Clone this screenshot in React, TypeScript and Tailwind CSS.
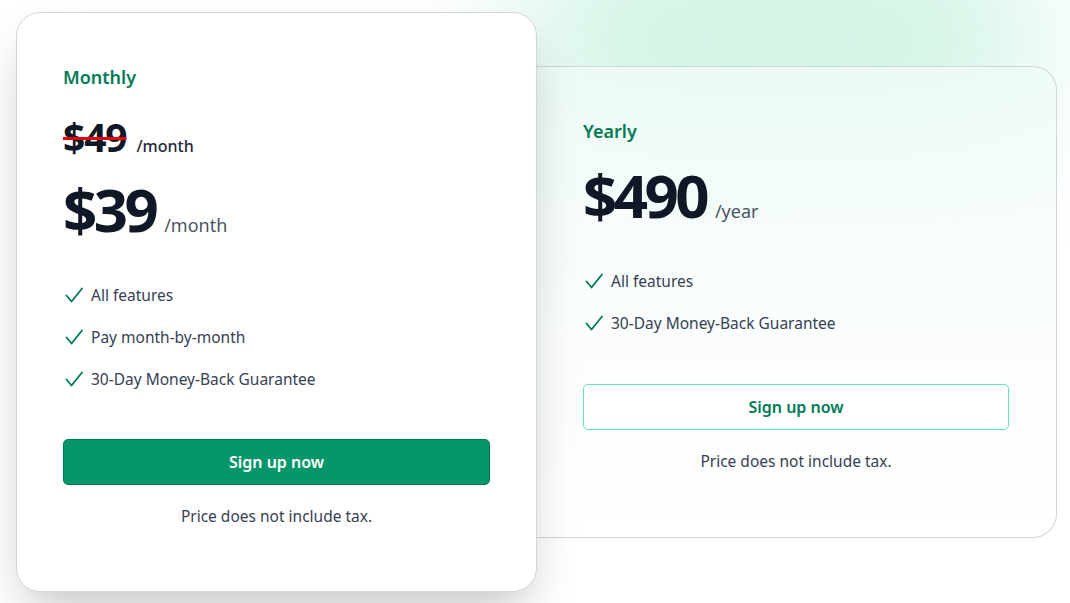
import React from "react";

type Plan = {
  name: string;
  price: string;
  unit: string;
  oldPrice?: string;
  features: string[];
  highlighted: boolean;
};

const plans: Plan[] = [
  {
    name: "Monthly",
    oldPrice: "$49",
    price: "$39",
    unit: "/month",
    features: ["All features", "Pay month-by-month", "30-Day Money-Back Guarantee"],
    highlighted: true,
  },
  {
    name: "Yearly",
    price: "$490",
    unit: "/year",
    features: ["All features", "30-Day Money-Back Guarantee"],
    highlighted: false,
  },
];

const CheckMark = () => (
  <svg viewBox="0 0 18 16" className="ml-[2px] h-4 w-[18px] shrink-0 text-emerald-700" fill="none">
    <path d="M1.5 8.5 6.5 14.5 17 1.5" stroke="currentColor" strokeWidth="1.8" strokeLinecap="round" strokeLinejoin="round" />
  </svg>
);

const FeatureList = ({ features }: { features: string[] }) => (
  <ul className="mt-[44px] flex flex-col gap-[18px]">
    {features.map((f) => (
      <li key={f} className="flex items-center gap-[8px] text-[15.5px] leading-6 text-gray-700">
        <CheckMark />
        <span>{f}</span>
      </li>
    ))}
  </ul>
);

const PlanCard = ({ plan }: { plan: Plan }) => {
  if (plan.highlighted) {
    return (
      <div className="relative z-10 flex h-[580px] w-[521px] shrink-0 flex-col rounded-3xl border border-gray-300 bg-white px-[46px] pt-[50px] shadow-2xl">
        <h3 className="text-lg leading-7 font-semibold text-emerald-700">{plan.name}</h3>
        <div className="mt-[26px] flex items-baseline gap-[10px]">
          <span className="text-[39px] leading-10 font-bold tracking-[-0.03em] text-gray-900 line-through decoration-red-600 decoration-[3px]">
            {plan.oldPrice}
          </span>
          <span className="text-base font-medium text-gray-800">{plan.unit}</span>
        </div>
        <div className="mt-[21px] flex items-baseline gap-[9px]">
          <span className="text-6xl leading-none font-bold tracking-[-0.06em] text-gray-900">{plan.price}</span>
          <span className="text-lg text-gray-600">{plan.unit}</span>
        </div>
        <FeatureList features={plan.features} />
        <button className="mt-[48px] h-[46px] w-full rounded-[5px] border border-emerald-700 bg-[#069669] text-base font-semibold text-white">
          Sign up now
        </button>
        <p className="mt-[19px] text-center text-[15.5px] leading-6 text-gray-700">Price does not include tax.</p>
      </div>
    );
  }

  return (
    <div className="flex h-[472px] w-[520px] shrink-0 flex-col rounded-r-3xl border border-l-0 border-gray-300 bg-gradient-to-b from-[#eefbf6]/90 via-[#f9fdfb]/90 to-white pr-[47px] pl-[46px] pt-[50px]">
      <h3 className="text-lg leading-7 font-semibold text-emerald-700">{plan.name}</h3>
      <div className="mt-[20px] flex items-baseline gap-[9px]">
        <span className="text-6xl leading-none font-bold tracking-[-0.06em] text-gray-900">{plan.price}</span>
        <span className="text-lg text-gray-600">{plan.unit}</span>
      </div>
      <FeatureList features={plan.features} />
      <button className="mt-[49px] h-[46px] w-full rounded-[5px] border border-emerald-300 bg-white text-base font-semibold text-emerald-700">
        Sign up now
      </button>
      <p className="mt-[19px] text-center text-[15.5px] leading-6 text-gray-700">Price does not include tax.</p>
    </div>
  );
};

export default function App() {
  return (
    <div
      className="relative h-[603px] w-full overflow-hidden bg-white"
      style={{ fontFamily: '"Noto Sans", "Open Sans", sans-serif' }}
    >
      {/* soft mint glow behind the cards */}
      <div className="pointer-events-none absolute -top-[90px] left-[520px] h-[260px] w-[520px] rounded-full bg-[#c9f2e0] opacity-80 blur-3xl" />
      <div className="relative flex h-full items-center pl-4">
        {plans.map((p) => (
          <PlanCard key={p.name} plan={p} />
        ))}
      </div>
    </div>
  );
}
